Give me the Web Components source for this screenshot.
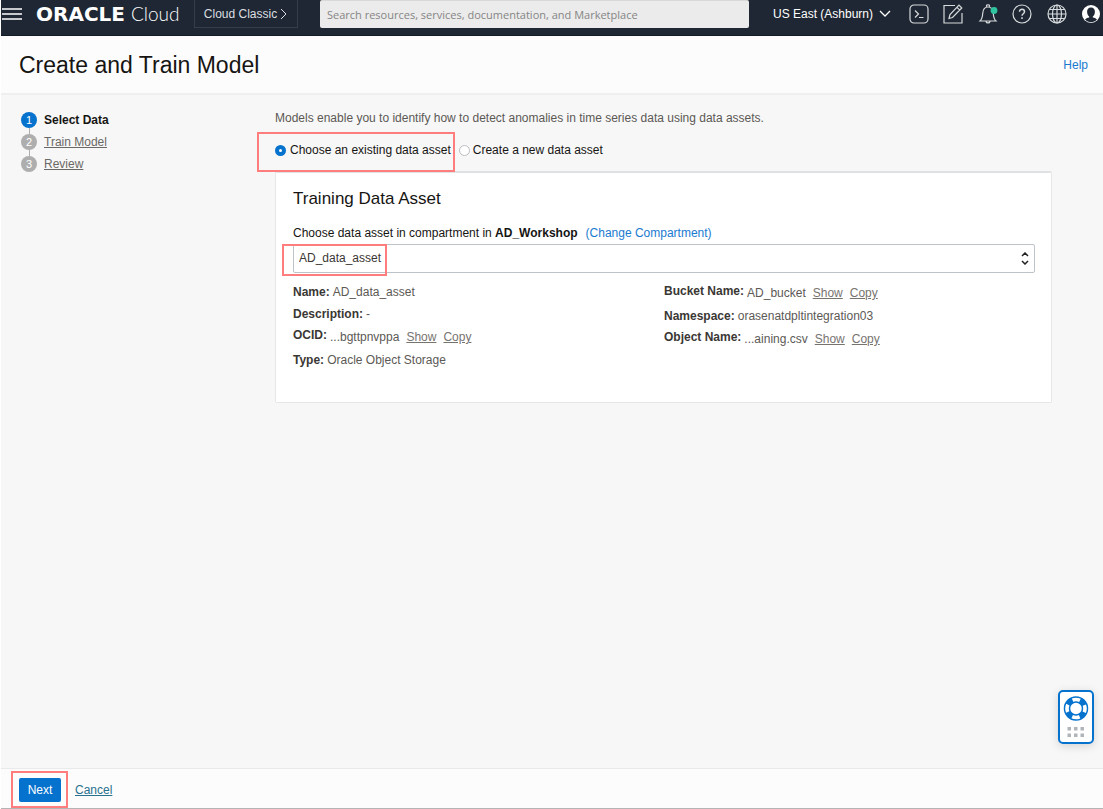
<!DOCTYPE html>
<html lang="en">
<head>
<meta charset="utf-8">
<meta name="viewport" content="width=device-width, initial-scale=1">
<title>Create and Train Model</title>
<style>
  body { margin: 0; font: 12px/20px "Liberation Sans", Arial, sans-serif; color: #161513; background: #f7f7f7; --mark: 2px solid #ff7d7d; }
</style>
</head>
<body>
<console-app></console-app>

<script>
const define = (name, html, setup) => customElements.define(name, class extends HTMLElement {
  connectedCallback() {
    if (this.shadowRoot) return;
    const root = this.attachShadow({ mode: 'open' });
    const t = document.createElement('template');
    t.innerHTML = html;
    root.append(t.content.cloneNode(true));
    if (setup) setup(this, root);
  }
});

define('tool-icons', `
<style>
  :host { display: block; width: 192px; flex: none; }
  div { display: flex; justify-content: space-between; }
  button { display: block; width: 20px; height: 20px; padding: 0; border: 0; background: none; color: #d7dadc; }
  svg { display: block; fill: none; stroke: currentColor; stroke-width: 1.2; }
</style>
<div>
  <button aria-label="Cloud Shell"><svg width="20" height="20" viewBox="0 0 20 20"><rect x="1" y="1" width="18" height="18" rx="4"/><path d="M6 6.500 9.500 10 6 13.500M10 13.500h4.500"/></svg></button>
  <button aria-label="Edit"><svg width="20" height="20" viewBox="0 0 20 20"><path d="M12 1.500H1v17.500h18V9M6 14.500l1-4L16 1.200l2.800 2.800L9.500 13.500zM14 3.300l2.800 2.800"/></svg></button>
  <button aria-label="Announcements"><svg width="20" height="20" viewBox="0 0 20 20"><path d="M8.500 2.800V1.500c0-1 3-1 3 0v1.300M2 17c2-1.800 2.500-3.500 2.700-7.500C5 5 7 3 10 3s5 2 5.300 6.500C15.500 13.500 16 15.200 18 17zM8 17.300c.3 2.200 3.700 2.200 4 0"/><circle cx="16" cy="6.500" r="3.400" fill="#2fc3a0" stroke="none"/></svg></button>
  <button aria-label="Help"><svg width="20" height="20" viewBox="0 0 20 20"><circle cx="10" cy="10" r="9"/><path stroke-width="1.500" d="M7.500 7.700c0-3.300 5-3.200 5 0 0 2-2.500 2.100-2.500 4.100M10 13.300v1.700"/></svg></button>
  <button aria-label="Language"><svg width="20" height="20" viewBox="0 0 20 20"><circle cx="10" cy="10" r="9"/><ellipse cx="10" cy="10" rx="4.500" ry="9"/><path d="M10 1v18M1 10h18M2.500 5.500h15M2.500 14.500h15"/></svg></button>
  <button aria-label="Profile"><svg width="20" height="20" viewBox="0 0 20 20"><circle cx="10" cy="10" r="9" fill="#fff" stroke="none"/><path fill="#1e2733" stroke="none" d="M10 3.500c2.600 0 3.900 1.800 3.900 4.300 0 2.200-.9 3.900-2.100 4.700v1.100c2 .4 3.500 1.100 4.200 2.200-3.400 3.300-8.600 3.300-12 0 .7-1.100 2.200-1.800 4.200-2.200v-1.100C7 11.700 6.100 10 6.100 7.800 6.100 5.300 7.400 3.500 10 3.500z"/></svg></button>
</div>`);

define('console-header', `
<style>
  :host { display: flex; align-items: flex-start; height: 35px; background: #1e2733; border-bottom: 1px solid #101a28; color: #fff; padding-right: 2px; }
  button { font: inherit; color: inherit; background: none; border: 0; padding: 0; display: flex; align-items: center; }
  svg { display: block; fill: none; stroke: currentColor; }
  .menu { width: 22px; height: 28px; }
  .logo { display: flex; align-items: center; height: 28px; width: 158px; margin-left: 13px; color: #fff; text-decoration: none; gap: 6px; }
  .oracle { font: bold 20px/28px "DejaVu Sans", sans-serif; }
  .cloud { font: 300 19px/28px Lato, "Open Sans", sans-serif; }
  .classic { box-sizing: border-box; width: 104px; height: 28px; border: 1px solid #343d48; border-top: 0; justify-content: center; gap: 3px; color: #dcdfe1; flex: none; }
  input { flex: 1; min-width: 80px; box-sizing: border-box; height: 28px; margin: 0 24px 0 22px; padding: 0 7px; border: 0; border-top: 1px solid #d8d8d8; border-radius: 2px; background: #ebebeb; font: 11px/20px "Open Sans", sans-serif; }
  input::placeholder { color: #858585; opacity: 1; }
  .region { height: 28px; width: 118px; justify-content: space-between; flex: none; margin-right: 18px; white-space: nowrap; }
  tool-icons { padding-top: 4px; }
</style>
<button class="menu" aria-label="Menu"><svg width="22" height="14" viewBox="0 0 22 14" stroke-width="1.500"><path d="M1 2h20M1 7h20M1 12h20"/></svg></button>
<a class="logo" href="#"><span class="oracle">ORACLE</span><span class="cloud">Cloud</span></a>
<button class="classic">Cloud Classic<svg width="8" height="12" viewBox="0 0 8 12"><path d="m1 1 5 5-5 5"/></svg></button>
<input type="search" aria-label="Search" placeholder="Search resources, services, documentation, and Marketplace">
<button class="region">US East (Ashburn)<svg width="12" height="8" viewBox="0 0 12 8" stroke-width="1.300"><path d="m1 1 5 5 5-5"/></svg></button>
<tool-icons></tool-icons>`);

define('page-title', `
<style>
  :host { display: flex; align-items: center; justify-content: space-between; height: 57px; padding: 0 15px 0 18px; background: #fcfcfc; border-bottom: 2px solid #efefef; }
  h1 { margin: 0; font-size: 23px; line-height: 28px; font-weight: normal; }
  a { color: #1a7ad0; text-decoration: none; }
</style>
<h1><slot></slot></h1><a href="#help">Help</a>`);

define('wizard-steps', `
<style>
  :host { display: block; width: 256px; flex: none; }
  ol { list-style: none; margin: 0; padding: 0; }
  li { display: flex; align-items: center; height: 22px; gap: 7px; }
  .n { position: relative; width: 16px; height: 16px; border-radius: 8px; background: #aeaeae; color: #fff; font-size: 11px; line-height: 16px; text-align: center; }
  li + li .n::before { content: ""; position: absolute; left: 8px; bottom: 16px; width: 1px; height: 6px; background: #aeaeae; }
  .on .n { background: #0572ce; }
  a { color: #6b6966; }
</style>
<ol>
  <li class="on" aria-current="step"><span class="n">1</span><b>Select Data</b></li>
  <li><span class="n">2</span><a href="#train">Train Model</a></li>
  <li><span class="n">3</span><a href="#review">Review</a></li>
</ol>`);

define('source-choice', `
<style>
  :host { display: flex; align-items: flex-start; }
  label { display: flex; align-items: center; gap: 4px; height: 20px; position: relative; white-space: nowrap; }
  label + label { margin-left: 8px; gap: 3px; }
  input { appearance: none; box-sizing: border-box; width: 11px; height: 11px; margin: 0; border: 1px solid #b9bec3; border-radius: 6px; background: #fff; }
  input:checked { border: 4px solid #0572ce; }
  .mark::after { content: ""; position: absolute; inset: -8px -4px -12px -18px; border: var(--mark); pointer-events: none; }
</style>
<label class="mark"><input type="radio" name="source" checked>Choose an existing data asset</label>
<label><input type="radio" name="source">Create a new data asset</label>`);

define('detail-row', `
<style>
  :host { display: flex; gap: 3px; height: 22px; align-items: center; color: #5c5955; white-space: nowrap; }
  :host([links]) { height: 24px; }
  :host([links]) b { align-self: flex-start; }
  b { color: #3a3734; }
  a { color: #77736f; margin-left: 4px; }
</style>
<b></b><span><slot></slot></span>`, (el, root) => {
  root.querySelector('b').textContent = el.getAttribute('label') + ':';
  if (el.hasAttribute('links'))
    for (const text of ['Show', 'Copy']) {
      const a = document.createElement('a');
      a.href = '#' + text.toLowerCase();
      a.textContent = text;
      root.append(a);
    }
});

define('asset-card', `
<style>
  :host { display: block; box-sizing: border-box; background: #fff; border: 1px solid #e6e7e8; border-top: 2px solid #dfe1e3; border-radius: 2px; padding: 14px 16px 31px 17px; }
  h2 { margin: 0 0 12px; font-size: 17px; line-height: 24px; font-weight: normal; }
  label, .line a { white-space: nowrap; }
  .line { display: flex; gap: 8px; height: 20px; }
  .line a { color: #1a7ad0; text-decoration: none; }
  .field { position: relative; margin: 1px 0 8px; }
  select { appearance: none; display: block; box-sizing: border-box; width: 100%; height: 29px; border: 1px solid #bcc3c9; border-radius: 2px; padding: 0 24px 2px 5px; background: #fff; color: #3a3734; font: inherit; }
  svg { position: absolute; right: 6px; top: 8px; fill: none; stroke: #222; stroke-width: 1.500; pointer-events: none; }
  .field::after { content: ""; position: absolute; left: -11px; top: 0; width: 105px; height: 32px; box-sizing: border-box; border: var(--mark); pointer-events: none; }
  .cols { display: grid; grid-template-columns: 1fr 1fr; }
</style>
<h2>Training Data Asset</h2>
<div class="line"><label for="asset">Choose data asset in compartment in <b>AD_Workshop</b></label><a href="#compartment">(Change Compartment)</a></div>
<div class="field">
  <select id="asset"><option>AD_data_asset</option></select>
  <svg width="8" height="13" viewBox="0 0 8 13"><path d="m1 4 3-3 3 3M1 9l3 3 3-3"/></svg>
</div>
<div class="cols">
  <div>
    <detail-row label="Name">AD_data_asset</detail-row>
    <detail-row label="Description">-</detail-row>
    <detail-row label="OCID" links>...bgttpnvppa</detail-row>
    <detail-row label="Type">Oracle Object Storage</detail-row>
  </div>
  <div>
    <detail-row label="Bucket Name" links>AD_bucket</detail-row>
    <detail-row label="Namespace">orasenatdpltintegration03</detail-row>
    <detail-row label="Object Name" links>...aining.csv</detail-row>
  </div>
</div>`);

define('support-widget', `
<style>
  :host { position: fixed; right: 9px; bottom: 65px; }
  button { display: block; box-sizing: border-box; width: 36px; height: 54px; padding: 0; border: 2px solid #0572ce; border-radius: 5px; background: #fff; box-shadow: 0 2px 10px rgba(0,0,0,.15); }
  svg { display: block; }
</style>
<button aria-label="Support"><svg width="32" height="50" viewBox="0 0 32 50">
  <circle cx="16" cy="16.500" r="9" fill="none" stroke="#0572ce" stroke-width="6.500"/>
  <circle cx="16" cy="16.500" r="9" fill="none" stroke="#fff" stroke-width="3.600" stroke-dasharray="7.640 6.500" stroke-dashoffset="3.820"/>
  <g fill="#b0b5ba"><path d="M7.500 35h3.500v3.500H7.500zM14 35h3.500v3.500H14zM20.500 35h3.500v3.500h-3.500zM7.500 41.500h3.500V45H7.500zM14 41.500h3.500V45H14zM20.500 41.500h3.500V45h-3.500z"/></g>
</svg></button>`);

define('action-bar', `
<style>
  :host { display: flex; align-items: center; gap: 14px; padding: 2px 18px 0; box-sizing: border-box; min-height: 41px; background: #fcfcfc; border-top: 1px solid #e9e9e9; border-bottom: 1px solid #b4b4b4; }
  button { width: 42px; height: 24px; padding: 0; border: 0; border-radius: 2px; background: #0572ce; color: #fff; font: inherit; position: relative; }
  button::after { content: ""; position: absolute; inset: -7px -7px -6px -8px; border: var(--mark); pointer-events: none; }
  a { color: #28718f; }
</style>
<button>Next</button><a href="#cancel">Cancel</a>`);

define('console-app', `
<style>
  :host { display: flex; flex-direction: column; box-sizing: border-box; min-height: 100vh; border-left: 1px solid #fff; }
  main { flex: 1; display: flex; padding: 13px 51px 40px 18px; }
  section { flex: 1; min-width: 0; }
  wizard-steps { padding: 1px 0 0 2px; box-sizing: border-box; }
  p { margin: 0 0 12px; color: #5c5955; }
  source-choice { margin-bottom: 11px; }
</style>
<console-header></console-header>
<page-title>Create and Train Model</page-title>
<main>
  <wizard-steps></wizard-steps>
  <section>
    <p>Models enable you to identify how to detect anomalies in time series data using data assets.</p>
    <source-choice></source-choice>
    <asset-card></asset-card>
  </section>
</main>
<action-bar></action-bar>
<support-widget></support-widget>`);
</script>
</body>
</html>
